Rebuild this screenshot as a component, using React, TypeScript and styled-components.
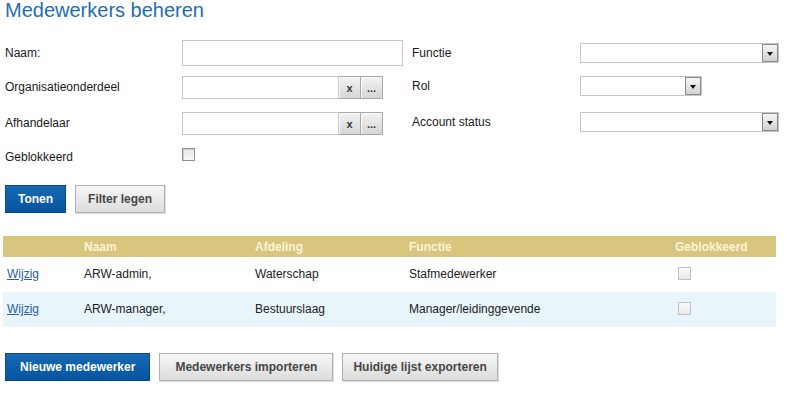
import React from 'react'
import styled, { createGlobalStyle } from 'styled-components'

const GlobalStyle = createGlobalStyle`
  * { box-sizing: border-box; }
  body {
    margin: 0;
    background: #fff;
    font-family: "Liberation Sans", Arial, sans-serif;
    font-size: 12px;
    color: #1a1a1a;
  }
`

const Page = styled.div`
  width: 796px;
  height: 400px;
  padding-left: 5px;
  overflow: hidden;
`

const Title = styled.h1`
  margin: 0 0 20px;
  font-size: 20px;
  line-height: 20px;
  font-weight: normal;
  color: #1f6db3;
`

const FormGrid = styled.div`
  display: grid;
  grid-template-columns: 177px 221px 177px 199px;
  grid-template-rows: 36px 36px 36px 19px;
  align-items: start;
`

const Label = styled.div<{ $h: number; $right?: boolean }>`
  height: ${({ $h }) => $h}px;
  line-height: ${({ $h }) => $h}px;
  padding-left: ${({ $right }) => ($right ? '9px' : '0')};
  white-space: nowrap;
`

const Field = styled.div<{ $h: number }>`
  display: flex;
  align-items: center;
  height: ${({ $h }) => $h}px;
`

const TextInput = styled.input<{ $w: number; $h: number }>`
  width: ${({ $w }) => $w}px;
  height: ${({ $h }) => $h}px;
  margin: 0;
  padding: 0 4px;
  border: 1px solid #c6c6c6;
  background: #fff;
  font: 12px "Liberation Sans", Arial, sans-serif;
  outline: none;
`

const Lookup = styled.div`
  display: flex;
  height: 23px;
`

const LookupButton = styled.button`
  width: 22px;
  height: 100%;
  margin: 0;
  padding: 0;
  border: 1px solid #a9a9a9;
  border-left: none;
  background: linear-gradient(#f2f2f2, #d6d6d6);
  color: #333;
  font: bold 11px "Liberation Sans", Arial, sans-serif;
  line-height: 20px;
  box-shadow: inset 1px 1px 0 #fafafa;
`

const SelectBox = styled.div<{ $w: number }>`
  display: flex;
  justify-content: flex-end;
  width: ${({ $w }) => $w}px;
  height: 20px;
  border: 1px solid #c6c6c6;
  background: #fff;
`

const SelectArrow = styled.span`
  display: flex;
  align-items: center;
  justify-content: center;
  width: 16px;
  height: 100%;
  border: 1px solid #8a8a8a;
  background: linear-gradient(#f6f6f6, #d2d2d2);

  &::after {
    content: '';
    margin-top: 2px;
    border-left: 3px solid transparent;
    border-right: 3px solid transparent;
    border-top: 4px solid #111;
  }
`

const CheckBox = styled.span<{ $disabled?: boolean }>`
  display: inline-block;
  width: 13px;
  height: 13px;
  border: 1px solid ${({ $disabled }) => ($disabled ? '#c2c2c2' : '#8f8f8f')};
  background: ${({ $disabled }) =>
    $disabled ? 'linear-gradient(#fafafa, #e8e8e8)' : 'linear-gradient(#e6e6e6, #f8f8f8)'};
  box-shadow: ${({ $disabled }) => ($disabled ? 'none' : 'inset 1px 1px 0 #d0d0d0')};
`

const ButtonRow = styled.div<{ $top: number }>`
  display: flex;
  gap: 9px;
  margin-top: ${({ $top }) => $top}px;
`

const Button = styled.button<{ $primary?: boolean; $pad?: number }>`
  height: 28px;
  margin: 0;
  padding: 0 ${({ $pad = 12 }) => $pad}px;
  border: 1px solid ${({ $primary }) => ($primary ? '#0a4a85' : '#b0b0b0')};
  background: ${({ $primary }) =>
    $primary ? 'linear-gradient(#1769b3, #0654a0)' : 'linear-gradient(#f6f6f6, #dcdcdc)'};
  color: ${({ $primary }) => ($primary ? '#fff' : '#474747')};
  font: bold 12px "Liberation Sans", Arial, sans-serif;
  box-shadow: ${({ $primary }) => ($primary ? 'none' : '1px 1px 1px rgba(0, 0, 0, 0.12)')};
  white-space: nowrap;
`

const Table = styled.table`
  margin: 23px 0 0 -2px;
  width: 773px;
  border-collapse: collapse;
  table-layout: fixed;
`

const Th = styled.th<{ $w: number }>`
  width: ${({ $w }) => $w}px;
  height: 21px;
  padding: 0 4px;
  background: #d8c57e;
  color: #fbf4d6;
  font-weight: bold;
  text-align: left;
`

const Row = styled.tr<{ $alt?: boolean }>`
  background: ${({ $alt }) => ($alt ? '#e8f5fb' : '#fff')};
`

const Td = styled.td`
  height: 35px;
  padding: 0 4px 1px;
  color: #222;
  vertical-align: middle;
`

const Link = styled.a`
  color: #2662a3;
  text-decoration: underline;
`

const CheckCell = styled(Td)`
  padding-left: 7px;
  padding-top: 2px;
`

const employees = [
  { naam: 'ARW-admin,', afdeling: 'Waterschap', functie: 'Stafmedewerker' },
  { naam: 'ARW-manager,', afdeling: 'Bestuurslaag', functie: 'Manager/leidinggevende' },
]

const LookupField = () => (
  <Lookup>
    <TextInput $w={157} $h={23} />
    <LookupButton>x</LookupButton>
    <LookupButton>...</LookupButton>
  </Lookup>
)

const App = () => (
  <Page>
    <GlobalStyle />
    <Title>Medewerkers beheren</Title>

    <FormGrid>
      <Label $h={26}>Naam:</Label>
      <Field $h={26}><TextInput $w={221} $h={26} /></Field>
      <Label $h={26} $right>Functie</Label>
      <Field $h={26}><SelectBox $w={199}><SelectArrow /></SelectBox></Field>

      <Label $h={23}>Organisatieonderdeel</Label>
      <Field $h={23}><LookupField /></Field>
      <Label $h={20} $right>Rol</Label>
      <Field $h={20}><SelectBox $w={122}><SelectArrow /></SelectBox></Field>

      <Label $h={23}>Afhandelaar</Label>
      <Field $h={23}><LookupField /></Field>
      <Label $h={20} $right>Account status</Label>
      <Field $h={20}><SelectBox $w={199}><SelectArrow /></SelectBox></Field>

      <Label $h={19}>Geblokkeerd</Label>
      <Field $h={13}><CheckBox /></Field>
    </FormGrid>

    <ButtonRow $top={18}>
      <Button $primary>Tonen</Button>
      <Button>Filter legen</Button>
    </ButtonRow>

    <Table>
      <thead>
        <tr>
          <Th $w={77}></Th>
          <Th $w={171}>Naam</Th>
          <Th $w={154}>Afdeling</Th>
          <Th $w={266}>Functie</Th>
          <Th $w={105}>Geblokkeerd</Th>
        </tr>
      </thead>
      <tbody>
        {employees.map((item, index) => (
          <Row key={index} $alt={index % 2 === 1}>
            <Td><Link href="#">Wijzig</Link></Td>
            <Td>{item.naam}</Td>
            <Td>{item.afdeling}</Td>
            <Td>{item.functie}</Td>
            <CheckCell><CheckBox $disabled /></CheckCell>
          </Row>
        ))}
      </tbody>
    </Table>

    <ButtonRow $top={26}>
      <Button $primary $pad={14}>Nieuwe medewerker</Button>
      <Button $pad={15}>Medewerkers importeren</Button>
      <Button $pad={10}>Huidige lijst exporteren</Button>
    </ButtonRow>
  </Page>
)

export default App
